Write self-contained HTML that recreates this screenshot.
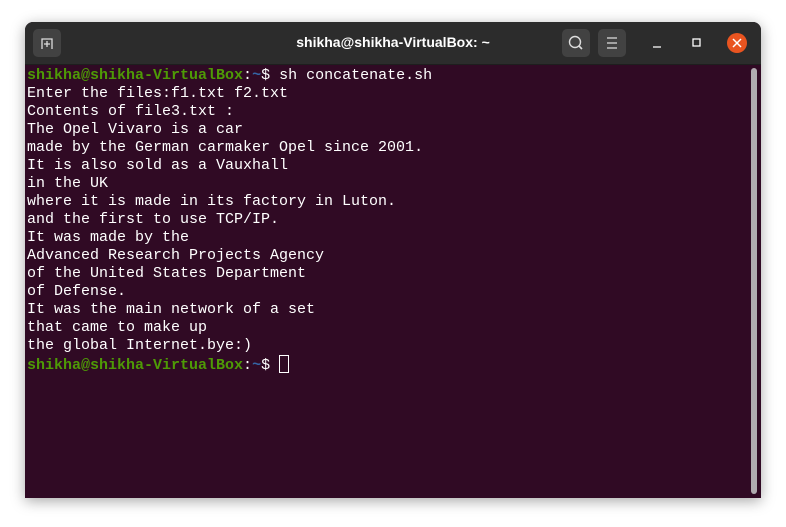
<!DOCTYPE html>
<html><head><style>
body{margin:0;width:786px;height:527px;background:#fff;position:relative;overflow:hidden}
.win{position:absolute;left:25px;top:22px;width:736px;height:476px;border-radius:8px 8px 0 0;overflow:hidden;box-shadow:0 3px 14px rgba(0,0,0,.35);background:#300a24}
.tb{position:absolute;left:0;top:0;width:736px;height:42px;background:#2c2c2c;border-bottom:1px solid #1e1e1e}
.btn{position:absolute;top:7px;width:28px;height:28px;border-radius:5px;background:#424242}
.title{position:absolute;left:0;right:0;top:12px;text-align:center;color:#fff;font:bold 14px "Liberation Sans",sans-serif}
.term{position:absolute;left:2px;top:45px;font:15px/18px "Liberation Mono",monospace;color:#fff;white-space:pre}
.g{color:#4e9a06;font-weight:bold}.b{color:#3465a4;font-weight:bold}
.sb{position:absolute;left:726px;top:46px;width:6px;height:426px;border-radius:3px;background:#b0abb0}
</style></head><body>
<div class="win">
<div class="tb">
<div class="btn" style="left:8px"><svg width="28" height="28"><path d="M9 20V10h10v10M11 15h6M14 12v6" stroke="#ddd" stroke-width="1.3" fill="none"/></svg></div>
<div class="title">shikha@shikha-VirtualBox: ~</div>
<div class="btn" style="left:537px"><svg width="28" height="28"><circle cx="13" cy="13" r="5.5" stroke="#ddd" stroke-width="1.4" fill="none"/><path d="M17 17l3 3" stroke="#ddd" stroke-width="1.6"/></svg></div>
<div class="btn" style="left:573px"><svg width="28" height="28"><path d="M9 9h10M9 14h10M9 19h10" stroke="#ddd" stroke-width="1.3"/></svg></div>
<svg style="position:absolute;left:620px;top:10px" width="110" height="24"><path d="M8 15h8" stroke="#fff" stroke-width="1.3"/><rect x="48" y="7" width="7" height="7" stroke="#fff" stroke-width="1.3" fill="none"/><circle cx="92" cy="11" r="10" fill="#e95420"/><path d="M88 7l8 8M96 7l-8 8" stroke="#fff" stroke-width="1.5"/></svg>
</div>
<div class="term"><span class="g">shikha@shikha-VirtualBox</span>:<span class="b">~</span>$ sh concatenate.sh
Enter the files:f1.txt f2.txt
Contents of file3.txt :
The Opel Vivaro is a car
made by the German carmaker Opel since 2001.
It is also sold as a Vauxhall
in the UK
where it is made in its factory in Luton.
and the first to use TCP/IP.
It was made by the
Advanced Research Projects Agency
of the United States Department
of Defense.
It was the main network of a set
that came to make up
the global Internet.bye:)
<span class="g">shikha@shikha-VirtualBox</span>:<span class="b">~</span>$ <span style="display:inline-block;width:8px;height:16px;border:1px solid #fff;vertical-align:-4px"></span></div>
<div class="sb"></div>
</div>
</body></html>
